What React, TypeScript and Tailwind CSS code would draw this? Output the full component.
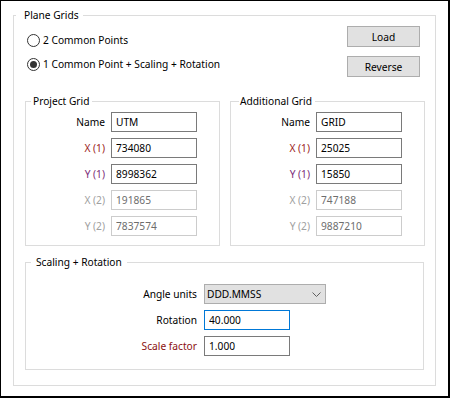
import React from "react";

const fieldFont = "font-['Segoe_UI','Noto_Sans',sans-serif] text-[10.2px]";

type Row = { label: string; value: string; color?: string; disabled?: boolean };

const projectRows: Row[] = [
  { label: "Name", value: "UTM" },
  { label: "X (1)", value: "734080", color: "text-[#9b1c20]" },
  { label: "Y (1)", value: "8998362", color: "text-[#7b2d78]" },
  { label: "X (2)", value: "191865", disabled: true },
  { label: "Y (2)", value: "7837574", disabled: true },
];

const additionalRows: Row[] = [
  { label: "Name", value: "GRID" },
  { label: "X (1)", value: "25025", color: "text-[#9b1c20]" },
  { label: "Y (1)", value: "15850", color: "text-[#7b2d78]" },
  { label: "X (2)", value: "747188", disabled: true },
  { label: "Y (2)", value: "9887210", disabled: true },
];

function Radio({ checked, label }: { checked?: boolean; label: string }) {
  return (
    <label className="flex h-4 items-center gap-[3px]">
      <span className="flex h-[13px] w-[13px] items-center justify-center rounded-full border border-[#333333] bg-white">
        {checked && <span className="h-[7px] w-[7px] rounded-full bg-[#333333]" />}
      </span>
      <span className="leading-4 text-black">{label}</span>
    </label>
  );
}

function Button({ children }: { children: React.ReactNode }) {
  return (
    <button className="flex h-[21px] w-[73px] items-center justify-center border border-[#adadad] bg-[#e1e1e1] leading-4 text-black">
      {children}
    </button>
  );
}

function TextBox({ value, disabled, focused, width = "w-[86px]" }: { value: string; disabled?: boolean; focused?: boolean; width?: string }) {
  const border = focused ? "border-[#0078d7]" : disabled ? "border-[#cccccc]" : "border-[#7a7a7a]";
  return (
    <input
      readOnly
      value={value}
      className={`h-5 ${width} border ${border} bg-white pl-[4px] leading-4 outline-none ${disabled ? "text-[#6d6d6d]" : "text-black"}`}
    />
  );
}

function GridGroup({ title, rows, legendClass }: { title: string; rows: Row[]; legendClass: string }) {
  return (
    <fieldset className="w-[195px] border border-[#dcdcdc]">
      <legend className={`leading-4 text-black ${legendClass}`}>{title}</legend>
      <div className="grid grid-cols-[79px_86px] items-center gap-x-[6px] gap-y-[6px] pt-[3px] pb-[9px]">
        {rows.map((row) => (
          <React.Fragment key={row.label}>
            <span className={`text-right leading-4 ${row.disabled ? "text-[#a0a0a0]" : row.color ?? "text-black"}`}>
              {row.label}
            </span>
            <TextBox value={row.value} disabled={row.disabled} />
          </React.Fragment>
        ))}
      </div>
    </fieldset>
  );
}

export default function App() {
  return (
    <div className={`box-border h-[398px] w-[450px] border-t border-l border-r-2 border-b-2 border-black bg-white ${fieldFont}`}>
      <fieldset className="mt-[6px] ml-[12px] w-[423px] border border-[#dcdcdc]">
        <legend className="ml-[2px] pl-[8px] pr-[4px] leading-4 text-black">Plane Grids</legend>
        <div className="pl-[11px] pr-[10px] pb-[15px]">
          {/* Mode + actions */}
          <div className="flex items-start justify-between pt-[3px]">
            <div className="ml-[2px] flex flex-col gap-[8px] pt-[6px]">
              <Radio label="2 Common Points" />
              <Radio checked label="1 Common Point + Scaling + Rotation" />
            </div>
            <div className="mr-[5px] flex flex-col gap-[9px]">
              <Button>Load</Button>
              <Button>Reverse</Button>
            </div>
          </div>

          {/* Grids */}
          <div className="mt-[16px] flex gap-[10px]">
            <GridGroup title="Project Grid" rows={projectRows} legendClass="ml-[5px] pl-[2px] pr-[3px]" />
            <GridGroup title="Additional Grid" rows={additionalRows} legendClass="ml-[8px] pl-[1px] pr-[3px]" />
          </div>

          {/* Scaling + Rotation */}
          <fieldset className="mt-[8px] w-[399px] border border-[#dcdcdc]">
            <legend className="ml-[5px] px-[5px] leading-4 text-black">Scaling + Rotation</legend>
            <div className="grid grid-cols-[171px_auto] items-center gap-x-[7px] gap-y-[6px] pt-[14px] pb-[13px]">
              <span className="text-right leading-4 text-black">Angle units</span>
              <div className="flex h-5 w-[122px] items-center justify-between border border-[#adadad] bg-[#e1e1e1] pl-[2px] pr-[4px]">
                <span className="leading-4 text-black">DDD.MMSS</span>
                <svg width="9" height="5" viewBox="0 0 9 5" fill="none">
                  <path d="M0.5 0.5 L4.5 4.5 L8.5 0.5" stroke="#606060" strokeWidth="1" />
                </svg>
              </div>
              <span className="text-right leading-4 text-black">Rotation</span>
              <TextBox value="40.000" focused />
              <span className="text-right leading-4 text-[#8b1010]">Scale factor</span>
              <TextBox value="1.000" />
            </div>
          </fieldset>
        </div>
      </fieldset>
    </div>
  );
}
